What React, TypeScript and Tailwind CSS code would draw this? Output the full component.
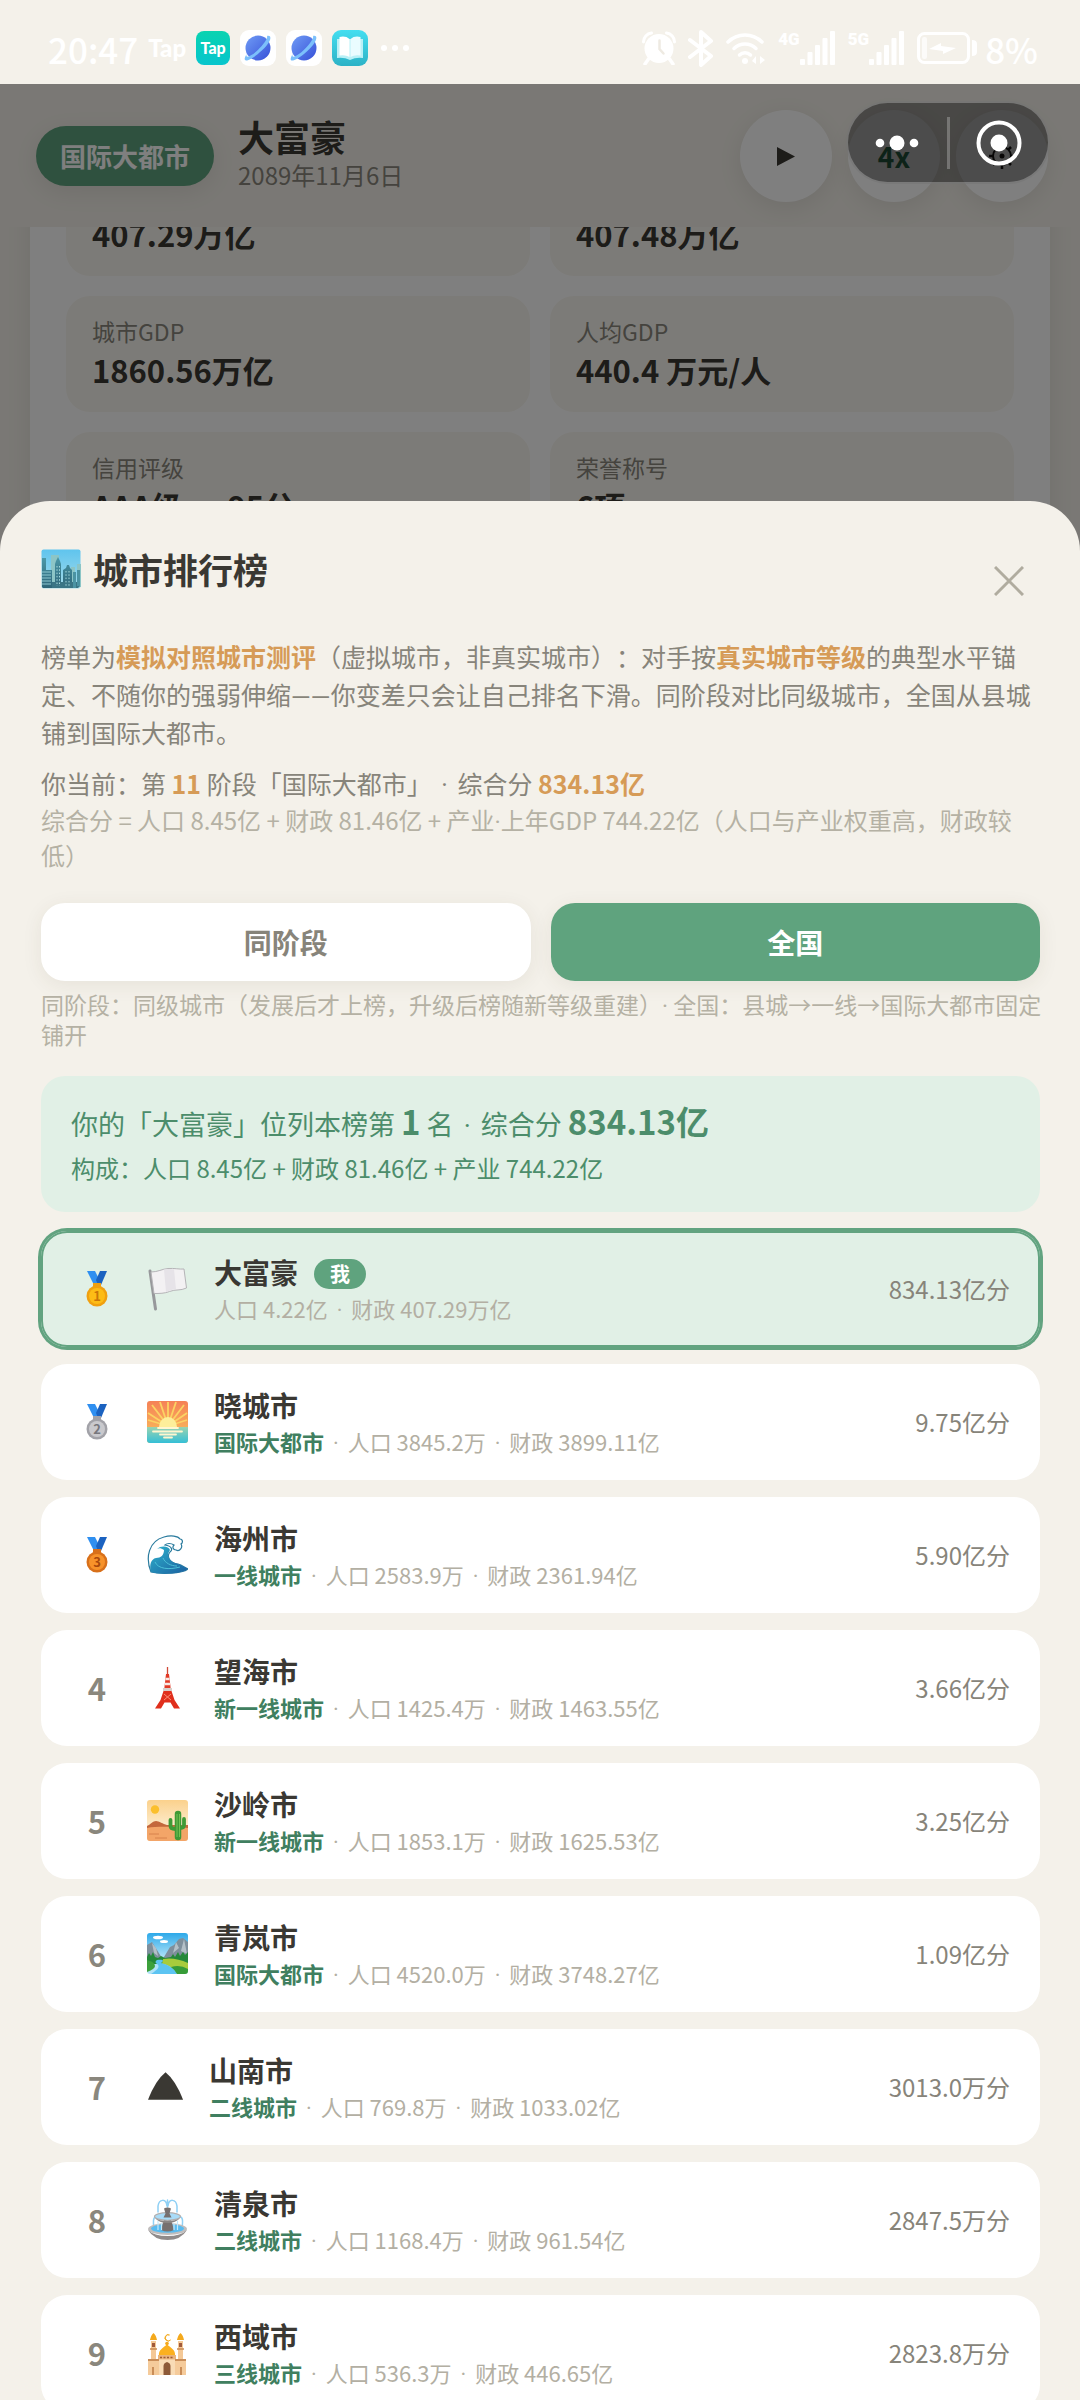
import React, { useState } from "react";

/* ---------- status bar icons ---------- */

const AlarmIcon = () => (
  <svg width="34" height="34" viewBox="0 0 34 34" aria-hidden="true">
    <path d="M1.500 11a9 9 0 0 1 8-9M32.500 11a9 9 0 0 0-8-9" fill="none" stroke="#fff" strokeWidth="3" strokeLinecap="round" />
    <circle cx="17" cy="17.500" r="14.500" fill="#fff" />
    <path d="M6.500 28 3 33M27.500 28l3.500 5" stroke="#fff" strokeWidth="3.500" strokeLinecap="round" />
    <path d="M17.500 9.500v8.500l4 4.500" fill="none" stroke="#eeeae2" strokeWidth="2.500" strokeLinecap="round" />
  </svg>
);

const BluetoothIcon = () => (
  <svg width="26" height="37" viewBox="0 0 26 37" aria-hidden="true">
    <path d="M2 10l21 16-10 9V2l10 9L2 27" fill="none" stroke="#fff" strokeWidth="4" strokeLinejoin="round" strokeLinecap="round" />
  </svg>
);

const WifiIcon = () => (
  <svg width="40" height="34" viewBox="0 0 40 34" aria-hidden="true">
    <g fill="none" stroke="#fff" strokeWidth="3.500" strokeLinecap="round">
      <path d="M2 11a24 24 0 0 1 34 0" />
      <path d="M8 17.500a16 16 0 0 1 22 0" />
      <path d="M13.500 24a8 8 0 0 1 11 0" />
    </g>
    <circle cx="19" cy="30" r="3" fill="#fff" />
    <path d="M30 25v8l-4-3zM34 33v-8l5 4z" fill="#fff" />
  </svg>
);

const SignalIcon = ({ label }: { label: string }) => (
  <div className="flex items-start text-white">
    <span className="font-['Roboto'] text-[17px] leading-4 font-black">{label}</span>
    <svg width="36" height="35" viewBox="0 0 36 35" aria-hidden="true" fill="#fff">
      <rect x="0" y="28" width="5" height="6" rx="1" />
      <rect x="7.500" y="21" width="5" height="13" rx="1" />
      <rect x="15" y="14" width="5" height="20" rx="1" />
      <rect x="22.500" y="7" width="5" height="27" rx="1" />
      <rect x="30" y="0" width="5" height="34" rx="1" />
    </svg>
  </div>
);

const BatteryIcon = () => (
  <svg width="60" height="32" viewBox="0 0 60 32" aria-hidden="true">
    <rect x="1.500" y="1.500" width="50" height="29" rx="6" fill="none" stroke="#fff" strokeWidth="3" />
    <rect x="5" y="5" width="5" height="22" rx="2" fill="#fff" opacity="0.7" />
    <path d="M55 8q5 0 5 4v8q0 4-5 4z" fill="#fff" />
    <path d="M12 17l12-6v3l15 2-13 6v-3z" fill="#fff" />
  </svg>
);

const PlanetIcon = () => (
  <svg width="36" height="36" viewBox="0 0 36 36" aria-hidden="true">
    <rect width="36" height="36" rx="9" fill="#fff" />
    <defs>
      <linearGradient id="planet" x1="0" y1="0" x2="1" y2="1">
        <stop offset="0" stopColor="#6f9bf5" />
        <stop offset="1" stopColor="#3650d8" />
      </linearGradient>
    </defs>
    <circle cx="18" cy="18" r="12.500" fill="url(#planet)" />
    <path d="M27 6c5-1 4 4 0 9S14 28 8.500 30s-4-2-2-6c-.5 3 .5 3.500 4 1.500C17 22 24 14 26.500 9c.8-1.600.8-2.400.5-3z" fill="#7cc0fb" />
  </svg>
);

const BookIcon = () => (
  <svg width="36" height="36" viewBox="0 0 36 36" aria-hidden="true">
    <defs>
      <linearGradient id="book" x1="0" y1="0" x2="0" y2="1">
        <stop offset="0" stopColor="#43def0" />
        <stop offset="1" stopColor="#2cb2c6" />
      </linearGradient>
    </defs>
    <rect width="36" height="36" rx="9" fill="url(#book)" />
    <path d="M5 9h26v19q-7-1-13 2-6-3-13-2z" fill="#b9f0f6" />
    <path d="M7.500 7q6-1.500 10 2v18q-4-2.500-10-1.500z" fill="#fff" />
    <path d="M28.500 7q-6-1.500-10 2v18q4-2.500 10-1.500z" fill="#eafcff" />
  </svg>
);

/* ---------- city icons ---------- */

const SkylineIcon = () => (
  <svg width="40" height="40" viewBox="0 0 40 40" aria-hidden="true">
    <defs>
      <linearGradient id="skyline" x1="0" y1="0" x2="0" y2="1">
        <stop offset="0" stopColor="#5fc4ee" />
        <stop offset="1" stopColor="#a5dcea" />
      </linearGradient>
      <linearGradient id="tower" x1="0" y1="0" x2="0" y2="1">
        <stop offset="0" stopColor="#4a98a8" />
        <stop offset="1" stopColor="#2d6578" />
      </linearGradient>
    </defs>
    <rect x="0.500" y="0.500" width="39" height="39" rx="2" fill="url(#skyline)" />
    <path d="M10 6h8v30h-8zM30 18h4v20h-4zM36 15h4v23h-4z" fill="#8cc5c6" />
    <path d="M1 9h4v12h6v18H2l-1-1z" fill="url(#tower)" />
    <path d="M14 39V15l1-3 2-4 2 4 1 3v24zM22 39V21l3-2 1-3h2l1 3 2 2v18z" fill="url(#tower)" />
    <path d="M11 33h28v4l-2 2H11z" fill="#3a7585" />
    <path d="M32 23h3v16h-3zM36 21h3v16h-3z" fill="#4b93a3" />
    <path d="M1 23h9M1 26h9M1 29h9M1 32h9M1 35h9" stroke="#8cc7d0" strokeWidth="1" />
    <path d="M16 17v20M18.500 17v20M25 22v16M28 22v16" stroke="#a5d9dc" strokeWidth="1" strokeDasharray="1.500 1.800" />
  </svg>
);

const Medal = ({ place, fill, rim, ink }: { place: number; fill: string; rim: string; ink: string }) => (
  <svg width="24" height="38" viewBox="0 0 24 38" role="img" aria-label={`${place}`}>
    <path d="M2 1h8l5 10-3 4H9z" fill="#2f8ff0" />
    <path d="M22 1h-7l-4 9 2 5h3z" fill="#1b62c0" />
    <path d="M8 13h8v4H8z" fill={rim} />
    <circle cx="12" cy="26" r="10.500" fill={rim} />
    <circle cx="12" cy="26" r="8" fill={fill} />
    <text x="12" y="31" textAnchor="middle" fontSize="13" fontWeight="700" fill={ink}>
      {place}
    </text>
  </svg>
);

const FlagIcon = () => (
  <svg width="41" height="44" viewBox="0 0 41 44" aria-hidden="true">
    <path d="M3 4 8.500 42" stroke="#97989b" strokeWidth="3" strokeLinecap="round" />
    <path d="M4 5C11 5 15 2 21 1.500s12 1 16 .5l2.500 19c-6 3-11 1-17 3.500-5 2-10 2-15.500 2z" fill="#f3f1f3" stroke="#b5b4b7" strokeWidth="1" />
    <path d="M17 2.500c4-1 7-.5 10-.2l2 19.700c-4 .5-7 2-10 3z" fill="#e6e3e8" />
  </svg>
);

const SunriseIcon = () => (
  <svg width="41" height="42" viewBox="0 0 41 42" aria-hidden="true">
    <defs>
      <linearGradient id="dawn" x1="0" y1="0" x2="0" y2="1">
        <stop offset="0" stopColor="#f58157" />
        <stop offset="1" stopColor="#fbc75b" />
      </linearGradient>
      <linearGradient id="bay" x1="0" y1="0" x2="0" y2="1">
        <stop offset="0" stopColor="#9ad3b0" />
        <stop offset="1" stopColor="#35bfd6" />
      </linearGradient>
    </defs>
    <rect width="41" height="42" rx="3" fill="url(#dawn)" />
    <g stroke="#fbd364" strokeWidth="1.800">
      <path d="M21 25V1M21 25 13 1M21 25 29 1M21 25 5 4M21 25 37 4M21 25 1 12M21 25 40 12M21 25 1 19M21 25 40 19" />
    </g>
    <path d="M0 26h41v13a3 3 0 0 1-3 3H3a3 3 0 0 1-3-3z" fill="url(#bay)" />
    <path d="M12 26a9 10 0 0 1 18 0z" fill="#fdee9a" />
    <path d="M11 27h20M6 30.500h29M13 33.500h16M17 36.500h8" stroke="#fff6cf" strokeWidth="1.800" strokeLinecap="round" />
  </svg>
);

const WaveIcon = () => (
  <svg width="41" height="40" viewBox="0 0 41 40" aria-hidden="true">
    <defs>
      <linearGradient id="wave" x1="0" y1="0" x2="1" y2="1">
        <stop offset="0" stopColor="#2fb2cc" />
        <stop offset="1" stopColor="#1a5fa0" />
      </linearGradient>
    </defs>
    <path d="M4 37C-2 22 2 6 17 2c7-2 14-1 16 2 3 0 3 4 1 5 2 3-1 8-5 6-3 0-4-3-2-5-3-2-7-2-9 0 7 1 8 5 5 7-4 5 0 11 8 12 4 1 6 3 10 5-5 5-29 5-37 3z" fill="#fff" stroke="#2a7b9e" strokeWidth="1.200" />
    <path d="M4 37c-2-7 0-13 5-14 5 0 8-3 8-8-3-2-5-2-7-1 4-4 12-3 13 1-4 5-1 12 8 14 4 1 6 3 10 5-5 5-29 6-37 3z" fill="url(#wave)" />
    <path d="M8 27c3 7 14 8 25 5M16 23c2 5 8 8 14 8" fill="none" stroke="#4cc0d8" strokeWidth="1" />
  </svg>
);

const TowerIcon = () => (
  <svg width="41" height="44" viewBox="0 0 41 44" aria-hidden="true">
    <path d="M20.500 1v10" stroke="#d04a38" strokeWidth="1.300" />
    <path d="M19 8h3l2 17h-7z" fill="#e23a26" />
    <path d="M18.500 13h4M18 18h5" stroke="#f7e9e4" strokeWidth="2.500" />
    <path d="M16 22h9v3h-9z" fill="#d9cfca" />
    <path d="M16.500 25h8l3 9 5.500 8.500h-6l-3.500-6h-6l-3.500 6H8L13.500 34z" fill="#e02f1c" />
    <path d="M17 28l7 6M24 28l-7 6" stroke="#ff8c73" strokeWidth="1" />
  </svg>
);

const DesertIcon = () => (
  <svg width="41" height="41" viewBox="0 0 41 41" aria-hidden="true">
    <defs>
      <linearGradient id="desert" x1="0" y1="0" x2="0" y2="1">
        <stop offset="0" stopColor="#fbd18c" />
        <stop offset="0.600" stopColor="#fdeac8" />
      </linearGradient>
    </defs>
    <rect width="41" height="41" rx="3" fill="url(#desert)" />
    <circle cx="8" cy="9.500" r="4.200" fill="#fbbf2d" />
    <path d="M0 26c4-2 6-5 9-5s7 3 11 4h21v6H0z" fill="#c4683c" />
    <path d="M0 28c12-2 28-1 41 0v10a3 3 0 0 1-3 3H3a3 3 0 0 1-3-3z" fill="#f3a568" />
    <path d="M2 34h10M8 38h12" stroke="#d8824c" strokeWidth="1" />
    <g fill="none" stroke="#3f9a36" strokeLinecap="round">
      <path d="M31 14v23" strokeWidth="6.500" />
      <path d="M23.500 20v6q0 3 5 3M37 19v6q0 3-4 3" strokeWidth="3.800" />
    </g>
    <path d="M30 14v23M32.500 14v23" stroke="#74c152" strokeWidth="1" />
  </svg>
);

const ParkIcon = () => (
  <svg width="41" height="41" viewBox="0 0 41 41" aria-hidden="true">
    <defs>
      <linearGradient id="park" x1="0" y1="0" x2="0" y2="1">
        <stop offset="0" stopColor="#2da9e9" />
        <stop offset="0.600" stopColor="#b0e3f8" />
      </linearGradient>
    </defs>
    <rect width="41" height="41" rx="3" fill="url(#park)" />
    <ellipse cx="11" cy="4.500" rx="5" ry="1.800" fill="#fff" />
    <ellipse cx="17" cy="8.500" rx="4" ry="1.500" fill="#fff" />
    <path d="M0 12l5-3 5 8 5 8v4H0zM17 24l6-10 4-2 5-6 4-1 5 4v18H17z" fill="#7e8f9c" />
    <path d="M5 10l2 10 4 3-2-8zM29 9l-3 11 6-5zM37 6l-3 12 6 3z" fill="#b4c0c8" />
    <path d="M0 24l2-4 2 3 2-4 2 5 3 1 3-2 4 2 6-1 2-3 2 3 3-5 2 4 3-4 2 3 3-3v12H0z" fill="#25893a" />
    <path d="M16 26q12-2 25 4v6H26q-6-5-11-5z" fill="#a8cc3c" />
    <path d="M0 27q8 2 8 6 0 3-8 6z" fill="#3da13c" />
    <path d="M10 27c7-1 7 1 4 3 8 2 14 6 16 11H4c8-5 9-8 6-10-2-1-2-3 0-4z" fill="#5cc4f2" />
    <path d="M24 34q9-3 17 2v2a3 3 0 0 1-3 3h-8q-2-4-6-7z" fill="#379c38" />
  </svg>
);

const MountainIcon = () => (
  <svg width="41" height="41" viewBox="0 0 41 41" aria-hidden="true">
    <path d="M1 34Q9 14 19 6q10 8 18 28z" fill="#3a3833" />
  </svg>
);

const FountainIcon = () => (
  <svg width="41" height="43" viewBox="0 0 41 43" aria-hidden="true">
    <g fill="none" stroke="#8fd0f5" strokeWidth="1.500" strokeLinecap="round">
      <path d="M20 8C19 0 12 1 11 8v6M21 8c1-8 8-7 9 0v6M20.500 9V2M9 19C6 19 6 24 7 31M32 19c4-1 4 4 3 11" />
    </g>
    <ellipse cx="20.500" cy="31" rx="19.500" ry="6" fill="#c0bdbd" />
    <ellipse cx="20.500" cy="30.500" rx="16.500" ry="4.300" fill="#58bbf0" />
    <path d="M1 32q6 10 19.500 10T40 32q-6 6-19.500 6T1 32z" fill="#8f8b8b" />
    <path d="M17 22h7l3 10q-6.500 3-13 0z" fill="#77706f" />
    <ellipse cx="20.500" cy="18.500" rx="13" ry="3.800" fill="#a9dcf8" stroke="#b3b0b0" strokeWidth="1.200" />
    <path d="M8 20q4 5 12.500 5T33 20q-4 3-12.500 3T8 20z" fill="#8a8584" />
    <path d="M17 10.500q3.500-2 7 0l-1.500 5 2 4h-8l2-4z" fill="#77706f" />
    <path d="M11 23v9M14.500 25v7M27 25v7M30.500 23v9" stroke="#c3e8fb" strokeWidth="1.200" />
  </svg>
);

const MosqueIcon = () => (
  <svg width="41" height="44" viewBox="0 0 41 44" aria-hidden="true">
    <path d="M4 10h5v20H4zM31 10h5v20h-5z" fill="#f4c896" />
    <path d="M3 9q1-5 3.500-7Q9 4 10 9zM30 9q1-5 3.500-7Q36 4 37 9z" fill="#f4a91d" />
    <path d="M5 12h3v4H5zM32 12h3v4h-3z" fill="#a05a3c" />
    <path d="M3 18h7M30 18h7" stroke="#c98a54" strokeWidth="1.500" />
    <path d="M22.500 4a3.200 3.200 0 1 0 1 5 3 3 0 1 1-1-5z" fill="#f3a81c" stroke="#f3a81c" strokeWidth="0.800" />
    <circle cx="20" cy="12.500" r="1.800" fill="#f3a81c" />
    <path d="M12 25c-1-7 5-8 8-12 3 4 9 5 8 12z" fill="#fbb01f" />
    <path d="M11 24h18v5H11z" fill="#eab37a" />
    <path d="M13 26.500h14" stroke="#9c5a35" strokeWidth="1.500" strokeDasharray="2 1.500" />
    <path d="M1 28h38v16H1z" fill="#f5cb9b" />
    <path d="M1 28h11v2H1zM28 28h11v2H28z" fill="#c98d58" />
    <path d="M12 29h16v15H12z" fill="#f9dcb6" />
    <path d="M16.500 44V35q0-3 3.500-4 3.500 1 3.500 4v9z" fill="#8d5a38" />
    <path d="M6 44v-8M34 44v-8" stroke="#c98d58" strokeWidth="2" />
  </svg>
);

/* ---------- data ---------- */

const stats = [
  { label: "财政", value: "407.29万亿" },
  { label: "累计收入", value: "407.48万亿" },
  { label: "城市GDP", value: "1860.56万亿" },
  { label: "人均GDP", value: "440.4 万元/人" },
  { label: "信用评级", value: "AAA级 · 95分" },
  { label: "荣誉称号", value: "6项" },
];

type City = {
  name: string;
  tier?: string;
  people: string;
  money: string;
  score: string;
  icon: React.ReactNode;
  narrow?: boolean;
  mine?: boolean;
};

const cities: City[] = [
  { name: "大富豪", people: "4.22亿", money: "407.29万亿", score: "834.13亿分", icon: <FlagIcon />, mine: true },
  { name: "晓城市", tier: "国际大都市", people: "3845.2万", money: "3899.11亿", score: "9.75亿分", icon: <SunriseIcon /> },
  { name: "海州市", tier: "一线城市", people: "2583.9万", money: "2361.94亿", score: "5.90亿分", icon: <WaveIcon /> },
  { name: "望海市", tier: "新一线城市", people: "1425.4万", money: "1463.55亿", score: "3.66亿分", icon: <TowerIcon /> },
  { name: "沙岭市", tier: "新一线城市", people: "1853.1万", money: "1625.53亿", score: "3.25亿分", icon: <DesertIcon /> },
  { name: "青岚市", tier: "国际大都市", people: "4520.0万", money: "3748.27亿", score: "1.09亿分", icon: <ParkIcon /> },
  { name: "山南市", tier: "二线城市", people: "769.8万", money: "1033.02亿", score: "3013.0万分", icon: <MountainIcon />, narrow: true },
  { name: "清泉市", tier: "二线城市", people: "1168.4万", money: "961.54亿", score: "2847.5万分", icon: <FountainIcon /> },
  { name: "西域市", tier: "三线城市", people: "536.3万", money: "446.65亿", score: "2823.8万分", icon: <MosqueIcon /> },
];

const medals = [
  <Medal key={1} place={1} fill="#fdbc16" rim="#f0a010" ink="#c97608" />,
  <Medal key={2} place={2} fill="#c9c9cd" rim="#a2a2a8" ink="#77777d" />,
  <Medal key={3} place={3} fill="#f7922a" rim="#d8701a" ink="#a8480c" />,
];

// the CJK face draws the middle dot a full character wide
const Dot = ({ tight = false }: { tight?: boolean }) => (
  <span className={`font-['Roboto'] leading-none ${tight ? "" : "mx-1"}`}>·</span>
);

/* ---------- sections ---------- */

const StatusBar = () => (
  <div className="flex h-[84px] shrink-0 items-center justify-between pt-3 pr-[42px] pl-12 text-white">
    <div className="flex items-center gap-[10px]">
      <span className="text-[35px] leading-none font-medium">20:47</span>
      <span className="font-['Lato'] text-[24px] leading-none font-black">Tap</span>
      <span className="flex h-[34px] w-[34px] items-center justify-center rounded-lg bg-linear-to-b from-[#0bd3b0] to-[#08c5cd] font-['Lato'] text-[16px] leading-none font-black">
        Tap
      </span>
      <PlanetIcon />
      <PlanetIcon />
      <BookIcon />
      <svg width="44" height="8" viewBox="0 0 44 8" fill="#fff" aria-hidden="true">
        <circle cx="6" cy="4" r="3" />
        <circle cx="17" cy="4" r="3" />
        <circle cx="28" cy="4" r="3" />
      </svg>
    </div>
    <div className="flex items-center gap-3">
      <AlarmIcon />
      <BluetoothIcon />
      <WifiIcon />
      <SignalIcon label="4G" />
      <SignalIcon label="5G" />
      <BatteryIcon />
      <span className="-ml-1 text-[35px] leading-none font-medium">8%</span>
    </div>
  </div>
);

const roundButton = "flex h-[92px] w-[92px] items-center justify-center rounded-full bg-white shadow-[0_6px_24px_rgba(0,0,0,0.08)]";

const GameHeader = () => (
  <header className="flex h-[143px] items-center justify-between pr-8 pl-9">
    <div className="flex items-center gap-6">
      <span className="flex h-[60px] items-center rounded-full bg-[#5fa37e] px-6 text-[26px] font-bold text-white shadow-[0_6px_24px_rgba(0,0,0,0.08)]">
        国际大都市
      </span>
      <div>
        <h1 className="text-[36px] leading-[42px] font-bold text-[#3a3833]">大富豪</h1>
        <p className="pb-1 text-[24px] leading-[36px] text-[#8a877d]">2089年11月6日</p>
      </div>
    </div>
    <div className="flex gap-4">
      <button type="button" aria-label="播放" className={roundButton}>
        <svg width="20" height="20" viewBox="0 0 20 20" aria-hidden="true">
          <path d="M1 1l18 9.500L1 20z" fill="#3a3833" />
        </svg>
      </button>
      <button type="button" className={`${roundButton} text-[28px] font-bold text-[#2e7552]`}>
        4x
      </button>
      <button type="button" aria-label="设置" className={roundButton}>
        <svg width="26" height="26" viewBox="0 0 26 26" aria-hidden="true">
          <circle cx="13" cy="13" r="9" fill="none" stroke="#1c1b18" strokeWidth="2" />
          <circle cx="13" cy="13" r="2.500" fill="#1c1b18" />
          <path d="M13 0v4M13 22v4M0 13h4M22 13h4M4 4l3 3M19 19l3 3M22 4l-3 3M7 19l-3 3" stroke="#1c1b18" strokeWidth="2.500" />
        </svg>
      </button>
    </div>
  </header>
);

const StatsPanel = () => (
  <div className="overflow-hidden px-[30px]">
    <div className="bg-white px-9 pb-9 shadow-[0_0_24px_rgba(0,0,0,0.08)]">
      <dl className="-mt-[67px] grid grid-cols-2 gap-5">
        {stats.map((s) => (
          <div key={s.label} className="rounded-3xl bg-[#f9f7f0] px-[26px] pt-[18px] pb-5">
            <dt className="text-[23px] leading-[34px] text-[#8a877d]">{s.label}</dt>
            <dd className="text-[31px] leading-[44px] font-bold text-[#3a3833]">{s.value}</dd>
          </div>
        ))}
      </dl>
    </div>
  </div>
);

const Capsule = () => (
  <div className="absolute top-[17px] right-[30px] flex h-[83px] w-[204px] items-center rounded-full border-2 border-white/25 bg-black/40">
    <button type="button" aria-label="更多" className="flex h-full flex-1 items-center justify-center">
      <svg width="44" height="16" viewBox="0 0 44 16" fill="#fff" aria-hidden="true">
        <circle cx="5" cy="8" r="4.300" />
        <circle cx="22" cy="8" r="7.500" />
        <circle cx="39" cy="8" r="4.300" />
      </svg>
    </button>
    <span className="h-[52px] w-[3px] bg-white/25" />
    <button type="button" aria-label="关闭小程序" className="flex h-full flex-1 items-center justify-center">
      <svg width="46" height="46" viewBox="0 0 46 46" aria-hidden="true">
        <circle cx="23" cy="23" r="20.500" fill="none" stroke="#fff" strokeWidth="4" />
        <circle cx="23" cy="23" r="8.500" fill="#fff" />
      </svg>
    </button>
  </div>
);

const CityRow = ({ city, rank }: { city: City; rank: number }) => (
  <li
    className={`flex h-[116px] items-center gap-[22px] rounded-[26px] pr-[30px] pl-7 ${
      city.mine ? "bg-[#e1f0e6] ring-[3px] ring-[#62a380] inset-ring-2 inset-ring-[#62a380]" : "bg-white"
    }`}
  >
    <span className="flex w-14 justify-center text-[31px] leading-none font-bold text-[#8a877d]">
      {rank <= 3 ? medals[rank - 1] : rank}
    </span>
    <span className={`flex ${city.narrow ? "w-10" : "w-[45px]"}`}>{city.icon}</span>
    <div className="min-w-0 flex-1">
      <div className="flex items-center gap-4 text-[28px] leading-[38px] font-bold text-[#3a3833]">
        {city.name}
        {city.mine && (
          <span className="mt-1 flex h-[30px] items-center rounded-full bg-[#5fa37e] px-4 text-[20px] text-white">我</span>
        )}
      </div>
      <p className="text-[22px] leading-[34px] text-[#b3afa3]">
        {city.tier && (
          <>
            <b className="font-bold text-[#407f60]">{city.tier}</b> <Dot />{" "}
          </>
        )}
        人口 {city.people} <Dot /> 财政 {city.money}
      </p>
    </div>
    <span className="text-[24px] text-[#87847a]">{city.score}</span>
  </li>
);

const tabs = ["同阶段", "全国"];

const RankingSheet = () => {
  const [tab, setTab] = useState("全国");

  return (
    <section
      role="dialog"
      aria-labelledby="ranking-title"
      className="h-[82%] w-full overflow-y-auto rounded-t-[50px] bg-[#f4f1ea] pt-10 pr-10 pl-[41px] [scrollbar-width:none]"
    >
      <div className="flex items-start justify-between">
        <h2 id="ranking-title" className="flex h-14 items-center gap-3 text-[35px] font-bold text-[#3a3833]">
          <SkylineIcon />
          城市排行榜
        </h2>
        <button type="button" aria-label="关闭" className="flex h-20 w-[62px] items-center justify-center">
          <svg width="30" height="30" viewBox="0 0 30 30" aria-hidden="true">
            <path d="M1 1l28 28M29 1 1 29" stroke="#b0ac9f" strokeWidth="3" />
          </svg>
        </button>
      </div>

      <p className="mt-4 text-[25px] leading-[38px] text-[#87847a] [text-spacing-trim:space-all]">
        榜单为<b className="text-[#d69b57]">模拟对照城市测评</b>（虚拟城市，非真实城市）：对手按
        <b className="text-[#d69b57]">真实城市等级</b>的典型水平锚定、不随你的强弱伸缩
        <span className="font-['Lato'] leading-none">——</span>
        你变差只会让自己排名下滑。同阶段对比同级城市，全国从县城铺到国际大都市。
      </p>
      <p className="mt-[13px] text-[25px] leading-[38px] text-[#87847a] [text-spacing-trim:space-all]">
        你当前：第 <b className="text-[#d69b57]">11</b> 阶段「国际大都市」 <Dot /> 综合分 <b className="text-[#d69b57]">834.13亿</b>
      </p>
      <p className="text-[24px] leading-[35px] text-[#b5b1a4] [text-spacing-trim:space-all]">
        综合分 = 人口 8.45亿 + 财政 81.46亿 + 产业
        <Dot tight />
        上年GDP 744.22亿（人口与产业权重高，财政较低）
      </p>

      <div className="mt-[31px] flex gap-5">
        {tabs.map((t) => (
          <button
            key={t}
            type="button"
            aria-pressed={t === tab}
            onClick={() => setTab(t)}
            className={`h-[78px] flex-1 rounded-3xl text-[28px] font-bold shadow-[0_4px_20px_rgba(80,70,40,0.08)] ${
              t === tab ? "bg-[#5fa37e] text-white" : "bg-white text-[#87847a]"
            }`}
          >
            {t}
          </button>
        ))}
      </div>
      <p className="-mr-3 mt-2 text-[23px] leading-[30px] text-[#b5b1a4] [text-spacing-trim:space-all]">
        同阶段：同级城市（发展后才上榜，升级后榜随新等级重建）
        <Dot tight /> 全国：县城→一线→国际大都市固定铺开
      </p>

      <div className="mt-[27px] rounded-3xl bg-[#e1f0e6] px-[30px] pt-6 pb-6 text-[#4c8d6b] [text-spacing-trim:space-all]">
        <p className="text-[27px] leading-[48px]">
          你的「大富豪」位列本榜第 <b className="text-[33px] leading-none">1</b> 名 <Dot /> 综合分{" "}
          <b className="text-[33px] leading-none">834.13亿</b>
        </p>
        <p className="text-[24px] leading-[40px]">构成：人口 8.45亿 + 财政 81.46亿 + 产业 744.22亿</p>
      </div>

      <ol className="mt-[19px] flex flex-col gap-[17px] pb-10">
        {cities.map((city, i) => (
          <CityRow key={city.name} city={city} rank={i + 1} />
        ))}
      </ol>
    </section>
  );
};

export default function App() {
  return (
    <div lang="zh-CN" className="flex h-screen flex-col overflow-hidden bg-[#f4f1ea] font-['Noto_Sans_CJK_SC',sans-serif]">
      <StatusBar />
      <div className="relative min-h-0 flex-1 overflow-hidden">
        <GameHeader />
        <StatsPanel />
        {/* dimmed backdrop with the ranking sheet on top */}
        <div className="absolute inset-0 flex items-end bg-black/50">
          <RankingSheet />
        </div>
        <Capsule />
      </div>
    </div>
  );
}
